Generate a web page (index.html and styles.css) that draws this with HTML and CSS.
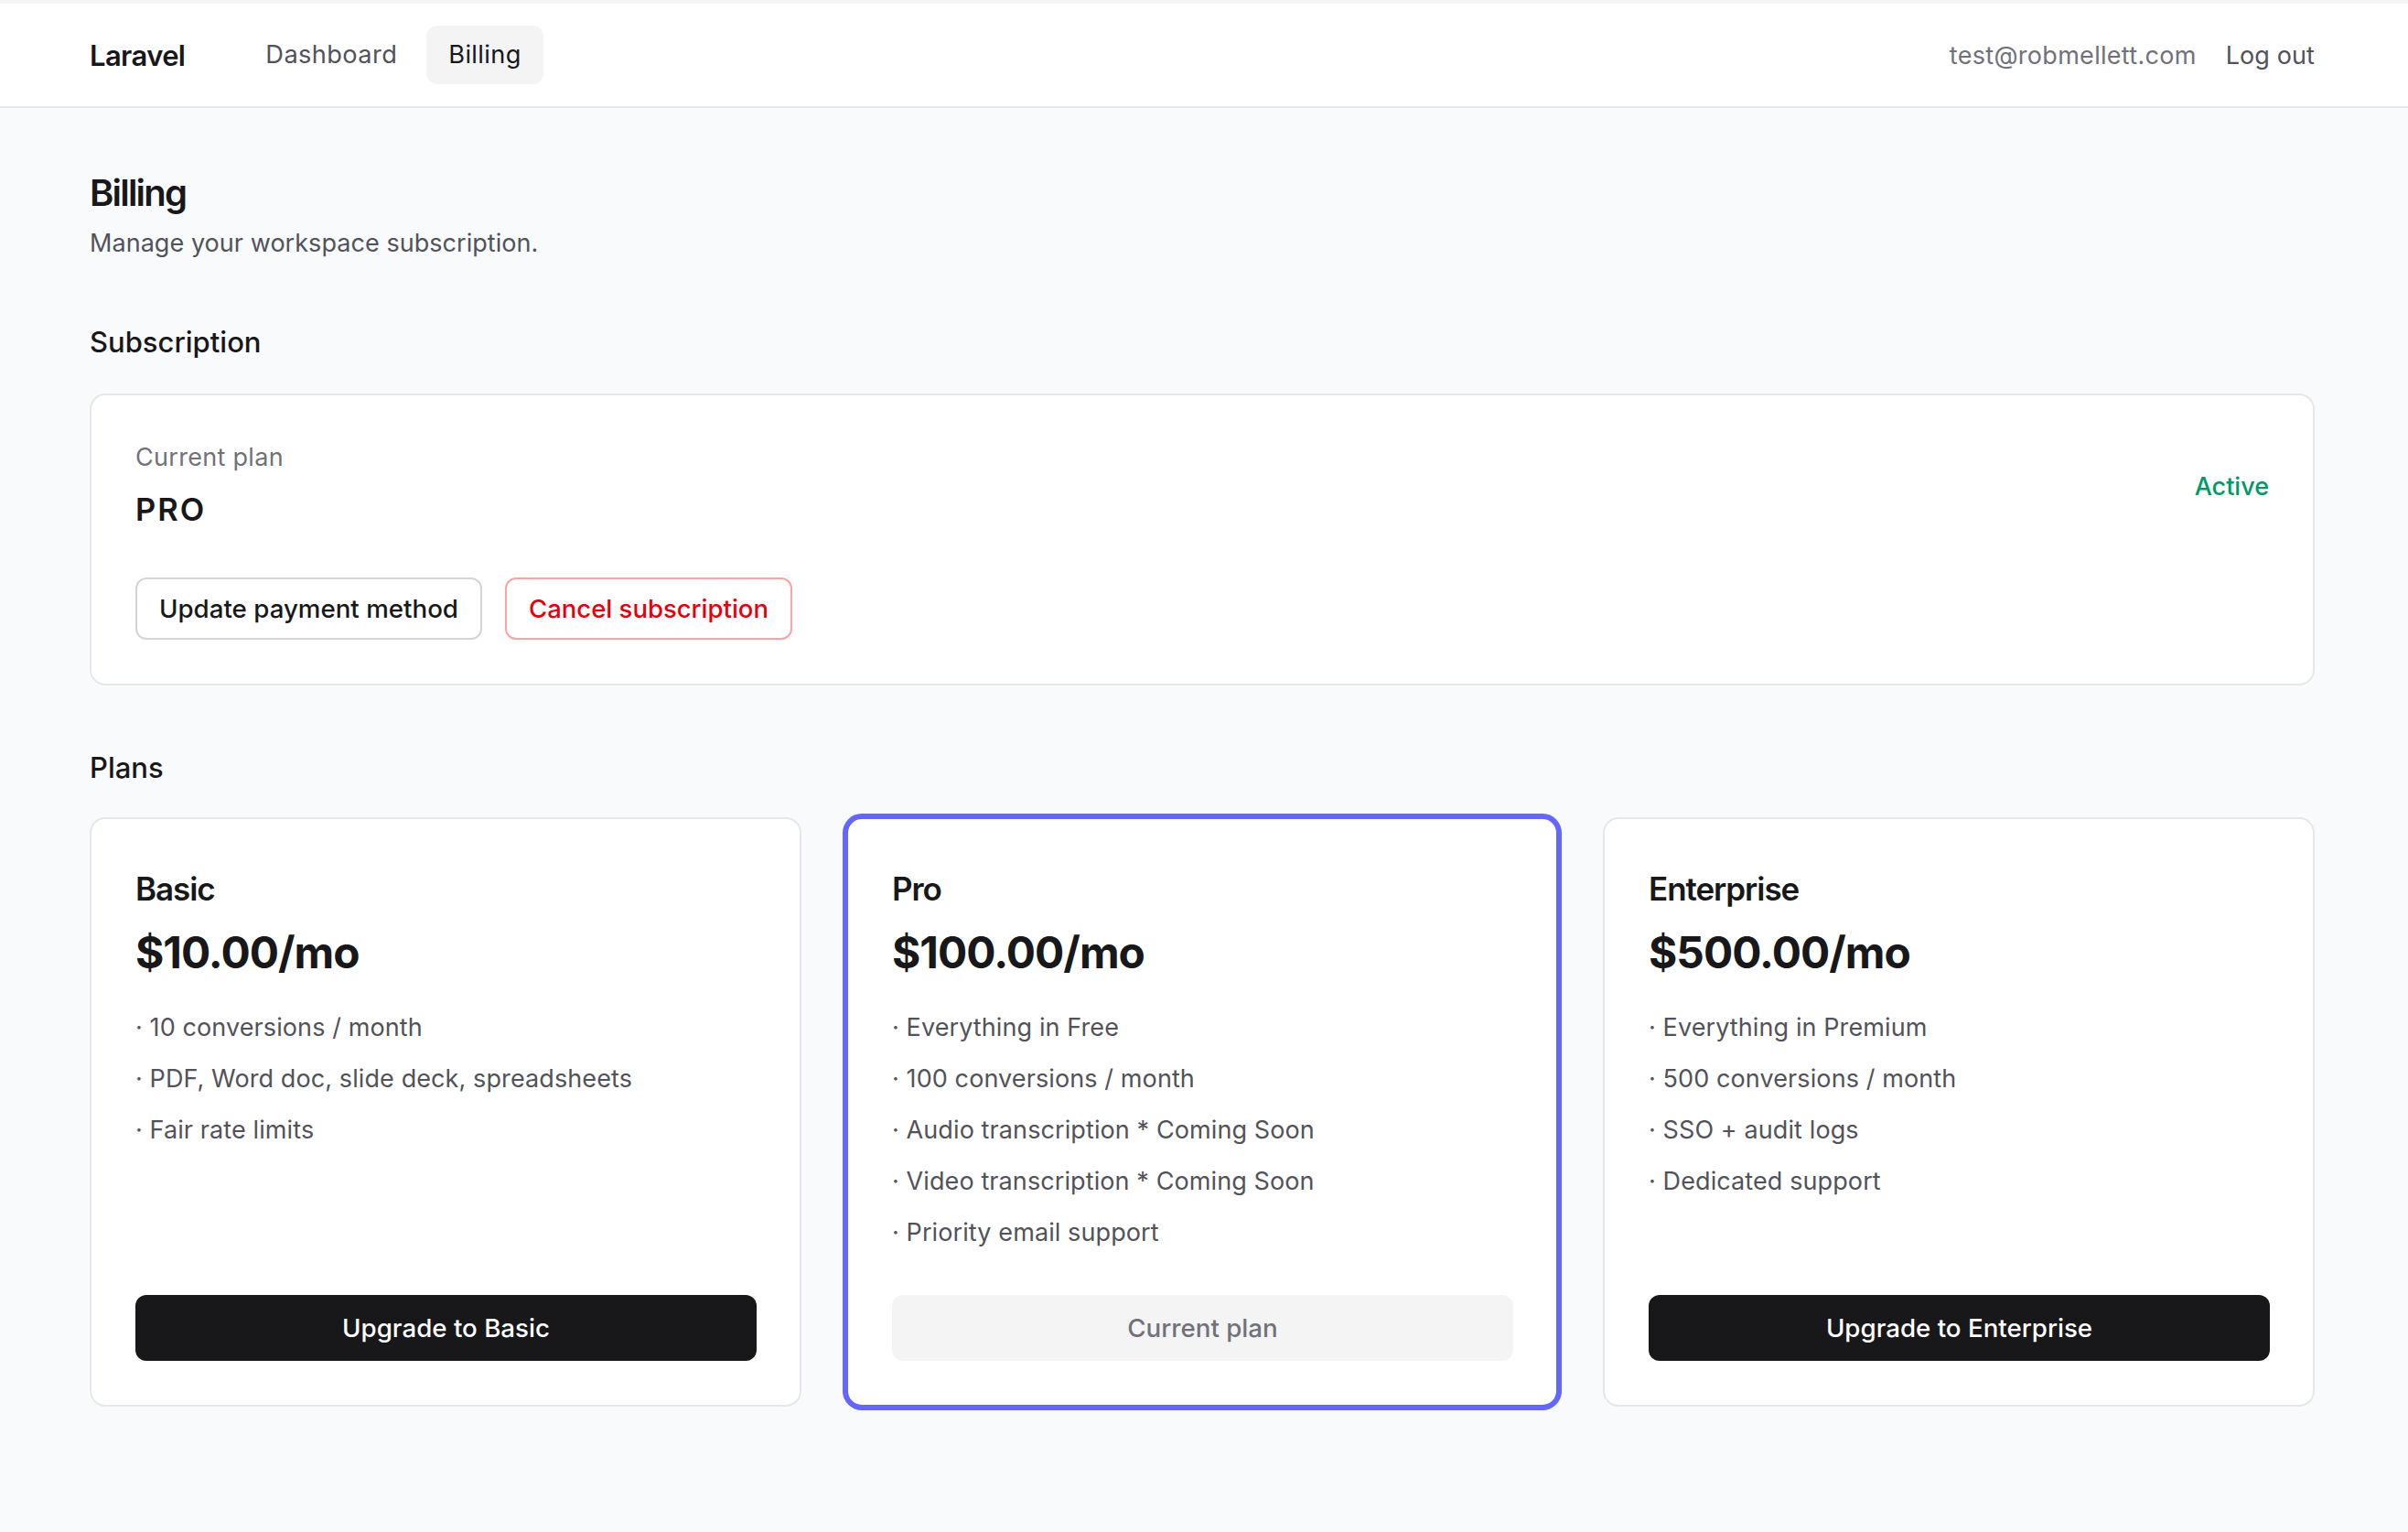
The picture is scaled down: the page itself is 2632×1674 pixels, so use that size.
FILE: index.html
```html
<!DOCTYPE html>
<html lang="en">
  <head>
    <meta charset="UTF-8" />
    <meta name="viewport" content="width=device-width, initial-scale=1.0" />
    <title>Billing</title>
    <link rel="stylesheet" href="styles.css">
  </head>
  <body>
    <!-- Top navigation -->
    <header class="topbar">
      <div class="topbar-left">
        <a class="brand" href="#">Laravel</a>
        <nav class="nav-links">
          <a class="nav-link" href="#">Dashboard</a>
          <a class="nav-link active" href="#">Billing</a>
        </nav>
      </div>
      <div class="topbar-right">
        <span class="user-email">test@robmellett.com</span>
        <a class="logout" href="#">Log out</a>
      </div>
    </header>

    <main class="page">
      <h1 class="page-title">Billing</h1>
      <p class="page-subtitle">Manage your workspace subscription.</p>

      <!-- Current subscription -->
      <h2 class="section-title">Subscription</h2>
      <section class="card subscription">
        <div class="subscription-head">
          <div>
            <div class="plan-label">Current plan</div>
            <div class="plan-current">PRO</div>
          </div>
          <div class="status">Active</div>
        </div>
        <div class="subscription-actions">
          <button class="btn btn-outline">Update payment method</button>
          <button class="btn btn-danger">Cancel subscription</button>
        </div>
      </section>

      <!-- Plans -->
      <h2 class="section-title plans-title">Plans</h2>
      <section class="plans">
        <article class="card plan">
          <h3 class="plan-name">Basic</h3>
          <div class="plan-price">$10.00/mo</div>
          <ul class="plan-features">
            <li>· 10 conversions / month</li>
            <li>· PDF, Word doc, slide deck, spreadsheets</li>
            <li>· Fair rate limits</li>
          </ul>
          <button class="btn btn-primary">Upgrade to Basic</button>
        </article>

        <article class="card plan plan-selected">
          <h3 class="plan-name">Pro</h3>
          <div class="plan-price">$100.00/mo</div>
          <ul class="plan-features">
            <li>· Everything in Free</li>
            <li>· 100 conversions / month</li>
            <li>· Audio transcription * Coming Soon</li>
            <li>· Video transcription * Coming Soon</li>
            <li>· Priority email support</li>
          </ul>
          <button class="btn btn-disabled" disabled>Current plan</button>
        </article>

        <article class="card plan">
          <h3 class="plan-name">Enterprise</h3>
          <div class="plan-price">$500.00/mo</div>
          <ul class="plan-features">
            <li>· Everything in Premium</li>
            <li>· 500 conversions / month</li>
            <li>· SSO + audit logs</li>
            <li>· Dedicated support</li>
          </ul>
          <button class="btn btn-primary">Upgrade to Enterprise</button>
        </article>
      </section>
    </main>
  </body>
</html>
```

FILE: styles.css
```css
* {
  box-sizing: border-box;
}
body {
  margin: 0;
  min-height: 100vh;
  background-color: #f9fafb;
  color: #18181b;
  font-family: Inter, "Liberation Sans", sans-serif;
  font-size: 27px;
}
a {
  color: inherit;
  text-decoration: none;
}
/* Top navigation */
.topbar {
  display: flex;
  justify-content: space-between;
  align-items: center;
  height: 118px;
  padding: 0 102px 0 98px;
  background: #fff;
  border-top: 4px solid #f5f5f5;
  border-bottom: 2px solid #e5e7eb;
}
.topbar-left {
  display: flex;
  align-items: center;
}
.brand {
  margin-right: 64px;
  font-size: 31px;
  font-weight: 600;
  letter-spacing: -0.02em;
}
.nav-links {
  display: flex;
  gap: 8px;
}
.nav-link {
  padding: 0 24px;
  height: 64px;
  line-height: 64px;
  border-radius: 12px;
  color: #52525b;
  font-size: 27.2px;
  letter-spacing: 0.4px;
}
.nav-link.active {
  background: #f4f4f5;
  color: #18181b;
}
.topbar-right {
  display: flex;
  align-items: center;
  gap: 32px;
}
.user-email {
  color: #71717a;
  letter-spacing: 0.3px;
}
.logout {
  color: #52525b;
  letter-spacing: 0.1px;
}
/* Page content */
.page {
  padding: 70px 102px 0 98px;
}
.page-title {
  margin: 0;
  font-size: 40px;
  font-weight: 600;
  line-height: 46px;
  letter-spacing: -0.045em;
}
.page-subtitle {
  margin: 14px 0 0;
  color: #52525b;
  line-height: 36px;
  letter-spacing: 0.05px;
}
.section-title {
  margin: 69px 0 0;
  font-size: 31px;
  font-weight: 500;
  line-height: 42px;
}
.card {
  background: #fff;
  border: 2px solid #e5e7eb;
  border-radius: 17px;
}
.subscription {
  margin-top: 35px;
  height: 319px;
  padding: 47px 48px;
}
.subscription-head {
  display: flex;
  justify-content: space-between;
  align-items: center;
}
.plan-label {
  color: #71717a;
  line-height: 42px;
  letter-spacing: 0.3px;
}
.plan-current {
  margin-top: 15px;
  font-size: 34.5px;
  font-weight: 600;
  line-height: 42px;
  letter-spacing: 2px;
}
.status {
  padding-top: 6px;
  color: #009966;
  font-weight: 500;
}
.subscription-actions {
  display: flex;
  gap: 25px;
  margin-top: 53px;
}
/* Buttons */
.btn {
  font-family: inherit;
  font-size: 27.7px;
  font-weight: 500;
  border-radius: 12px;
}
.btn-outline,
.btn-danger {
  height: 68px;
  padding: 0 24px;
  background: #fff;
  border: 2px solid #d4d4d8;
  color: #18181b;
}
.btn-danger {
  border-color: #ffa2a2;
  color: #e7000b;
  font-size: 27.5px;
}
.btn-primary,
.btn-disabled {
  width: 100%;
  height: 72px;
  border: none;
  background: #18181b;
  color: #fff;
}
.btn-disabled {
  background: #f4f4f5;
  color: #71717a;
}
/* Plan cards */
.plans {
  display: grid;
  grid-template-columns: repeat(3, 1fr);
  gap: 49px;
  margin-top: 33px;
}
.plan {
  display: flex;
  flex-direction: column;
  height: 644px;
  padding: 48px 47px 48px 48px;
}
.plan-selected {
  border-color: #6366ff;
  box-shadow: 0 0 0 4px #6366ff;
}
.plan-name {
  margin: 0;
  font-size: 35px;
  font-weight: 600;
  line-height: 56px;
  letter-spacing: -0.03em;
}
.plan-price {
  margin-top: 14px;
  font-size: 47.8px;
  font-weight: 700;
  line-height: 56px;
  letter-spacing: -0.02em;
}
.plan-features {
  flex: 1;
  margin: 26px 0 0;
  padding: 0;
  list-style: none;
  color: #52525b;
  letter-spacing: 0.1px;
}
.plan-features li {
  line-height: 56px;
}
```
